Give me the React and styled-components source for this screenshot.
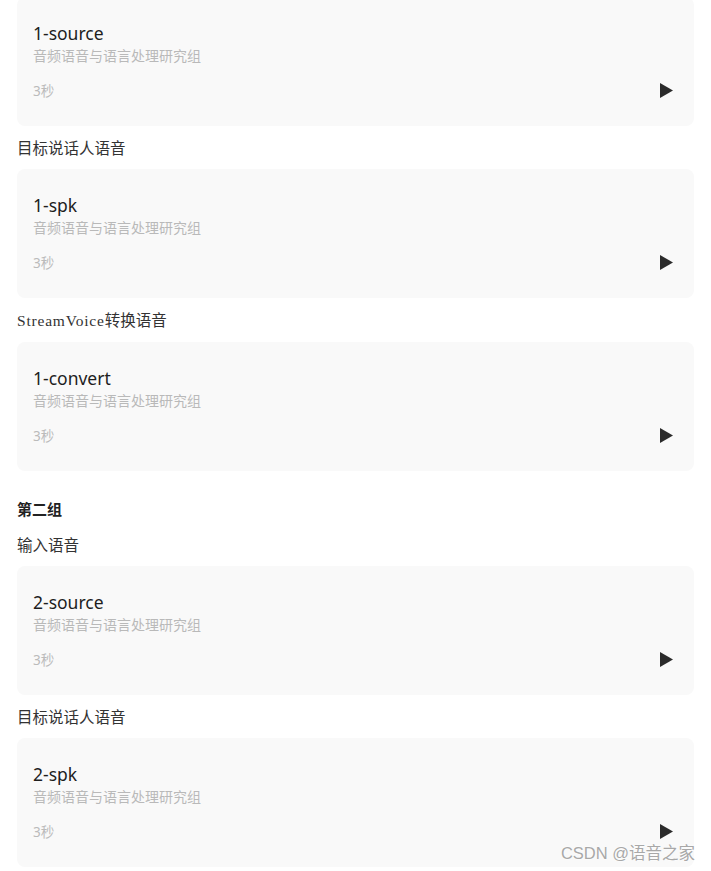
import React from 'react';
import styled, { createGlobalStyle } from 'styled-components';

const GlobalStyle = createGlobalStyle`
  body {
    margin: 0;
    background: #fff;
    font-family: "Noto Sans", "Noto Sans CJK SC", sans-serif;
  }
`;

const Page = styled.div`
  position: relative;
  width: 711px;
  height: 871px;
  overflow: hidden;
`;

const Content = styled.div`
  display: flex;
  flex-direction: column;
  width: 677px;
  margin: -3px 0 0 17px;
`;

const GroupTitle = styled.div`
  margin-top: 27px;
  font-size: 15px;
  line-height: 22px;
  font-weight: 700;
  color: #222;
`;

const Label = styled.div`
  margin: ${(p) => (p.$tight ? '14px' : '11px')} 0 10px;
  font-size: 15.5px;
  line-height: 22px;
  color: #333;
`;

const Latin = styled.span`
  font-family: "Liberation Serif", serif;
  letter-spacing: 0.8px;
`;

const Card = styled.div`
  display: flex;
  flex-direction: column;
  height: 129px;
  box-sizing: border-box;
  padding: 24px 21px 0 16px;
  background: #f9f9f9;
  border-radius: 8px;
`;

const Title = styled.div`
  font-size: 17.5px;
  line-height: 24px;
  color: #1e1e1e;
`;

const Subtitle = styled.div`
  font-size: 14px;
  line-height: 21px;
  color: #b9b9b9;
`;

const Meta = styled.div`
  display: flex;
  align-items: center;
  justify-content: space-between;
  margin-top: 14px;
  height: 20px;
`;

const Duration = styled.span`
  font-size: 13.5px;
  color: #bbbbbb;
`;

const PlayButton = styled.button`
  display: flex;
  padding: 0;
  border: 0;
  background: none;
  cursor: pointer;
`;

const Watermark = styled.div`
  position: absolute;
  right: 16px;
  bottom: 7px;
  font-family: "Liberation Sans", "Noto Sans CJK SC", sans-serif;
  font-size: 16.5px;
  color: #a8a8a8;
  text-shadow: 0 0 2px #fff, 0 0 2px #fff;
`;

const PlayIcon = () => (
  <svg width="13" height="15" viewBox="0 0 13 15">
    <polygon points="0,0 13,7.5 0,15" fill="#2b2b2b" />
  </svg>
);

const AudioCard = ({ name }) => (
  <Card>
    <Title>{name}</Title>
    <Subtitle>音频语音与语言处理研究组</Subtitle>
    <Meta>
      <Duration>3秒</Duration>
      <PlayButton aria-label="play">
        <PlayIcon />
      </PlayButton>
    </Meta>
  </Card>
);

export default function App() {
  return (
    <Page>
      <GlobalStyle />
      <Content>
        <AudioCard name="1-source" />
        <Label>目标说话人语音</Label>
        <AudioCard name="1-spk" />
        <Label>
          <Latin>StreamVoice</Latin>转换语音
        </Label>
        <AudioCard name="1-convert" />

        <GroupTitle>第二组</GroupTitle>
        <Label $tight>输入语音</Label>
        <AudioCard name="2-source" />
        <Label>目标说话人语音</Label>
        <AudioCard name="2-spk" />
      </Content>
      <Watermark>CSDN @语音之家</Watermark>
    </Page>
  );
}
